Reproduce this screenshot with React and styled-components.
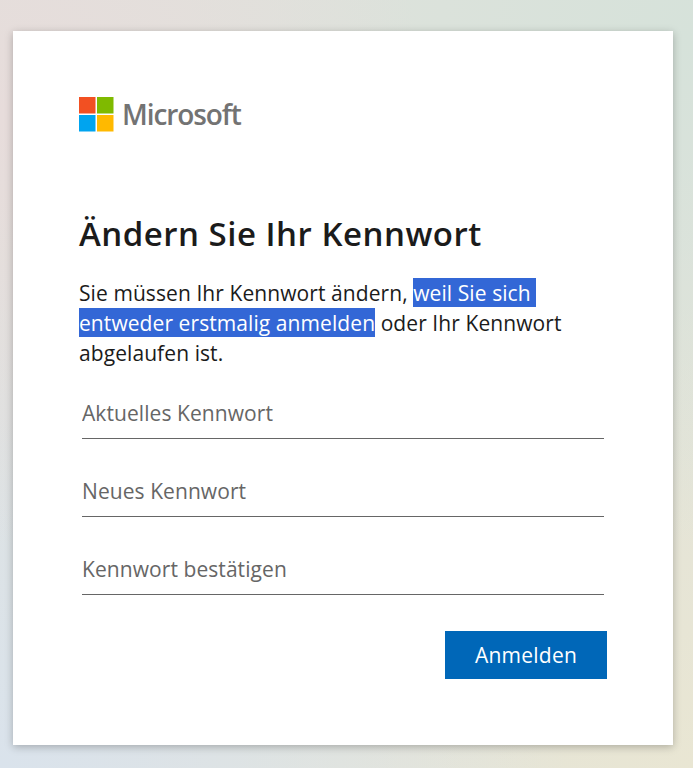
import React from "react";
import styled, { createGlobalStyle } from "styled-components";

const Global = createGlobalStyle`
  html, body { margin: 0; padding: 0; height: 100%; }
  body { font-family: "Open Sans", "Noto Sans", sans-serif; }
  #root { min-height: 768px; }
`;

const Page = styled.main`
  box-sizing: border-box;
  width: 693px;
  height: 768px;
  padding: 31px 20px 23px 13px;
  overflow: hidden;
  background:
    radial-gradient(circle at 0% 15%, rgba(231, 220, 219, 1), rgba(231, 220, 219, 0) 45%),
    radial-gradient(circle at 100% 5%, rgba(214, 226, 218, 1), rgba(214, 226, 218, 0) 50%),
    radial-gradient(circle at 0% 100%, rgba(218, 227, 236, 1), rgba(218, 227, 236, 0) 55%),
    radial-gradient(circle at 100% 100%, rgba(233, 230, 211, 1), rgba(233, 230, 211, 0) 60%),
    #e0e2dc;
`;

const Card = styled.section`
  box-sizing: border-box;
  width: 660px;
  height: 714px;
  padding: 66px 66px 0;
  background: #fff;
  box-shadow: 0 2px 8px rgba(0, 0, 0, 0.25);
`;

const Brand = styled.div`
  display: flex;
  align-items: center;
  gap: 8px;
  height: 35px;
`;

const Wordmark = styled.span`
  padding-bottom: 2px;
  font-family: "Open Sans", sans-serif;
  font-size: 28px;
  font-weight: 600;
  letter-spacing: -1.1px;
  color: #737373;
`;

const Title = styled.h1`
  margin: 82px 0 0;
  font-size: 33px;
  line-height: 40px;
  font-weight: 600;
  letter-spacing: 0.5px;
  color: #1b1b1b;
`;

const Message = styled.p`
  margin: 24px 0 0;
  font-size: 21px;
  line-height: 30px;
  letter-spacing: 0.08px;
  color: #1b1b1b;
`;

const Mark = styled.span`
  padding-top: 1px;
  background: #3367d6;
  color: #fff;
`;

const Fields = styled.div`
  display: flex;
  flex-direction: column;
  gap: 28px;
  margin: 21px 3px 0;
`;

const Field = styled.input`
  display: block;
  box-sizing: border-box;
  width: 522px;
  height: 50px;
  padding: 0 0 2px;
  border: 0;
  border-bottom: 1px solid #666;
  outline: none;
  background: transparent;
  font-family: inherit;
  font-size: 21px;
  letter-spacing: 0.07px;
  color: #1b1b1b;
  &::placeholder { color: #666; opacity: 1; }
`;

const Actions = styled.div`
  display: flex;
  justify-content: flex-end;
  margin: 36px 0 0;
`;

const Submit = styled.button`
  width: 162px;
  height: 48px;
  border: 0;
  padding: 0;
  background: #0067b8;
  color: #fff;
  font-family: inherit;
  font-size: 21px;
  letter-spacing: 0.25px;
`;

function Logo() {
  return (
    <svg width="35" height="35" viewBox="0 0 35 35" aria-hidden="true">
      <rect x="0" y="0" width="16.5" height="16.5" fill="#f25022" />
      <rect x="18" y="0" width="16.5" height="16.5" fill="#7fba00" />
      <rect x="0" y="18" width="16.5" height="16.5" fill="#00a4ef" />
      <rect x="18" y="18" width="16.5" height="16.5" fill="#ffb900" />
    </svg>
  );
}

export default function App() {
  return (
    <Page>
      <Global />
      <Card>
        <Brand>
          <Logo />
          <Wordmark>Microsoft</Wordmark>
        </Brand>
        <Title>Ändern Sie Ihr Kennwort</Title>
        <Message>
          Sie müssen Ihr Kennwort ändern, <Mark>weil Sie sich&nbsp;</Mark>
          <br />
          <Mark>entweder erstmalig anmelden</Mark> oder Ihr Kennwort
          <br />
          abgelaufen ist.
        </Message>
        <Fields>
          <Field type="password" placeholder="Aktuelles Kennwort" />
          <Field type="password" placeholder="Neues Kennwort" />
          <Field type="password" placeholder="Kennwort bestätigen" />
        </Fields>
        <Actions>
          <Submit type="button">Anmelden</Submit>
        </Actions>
      </Card>
    </Page>
  );
}
